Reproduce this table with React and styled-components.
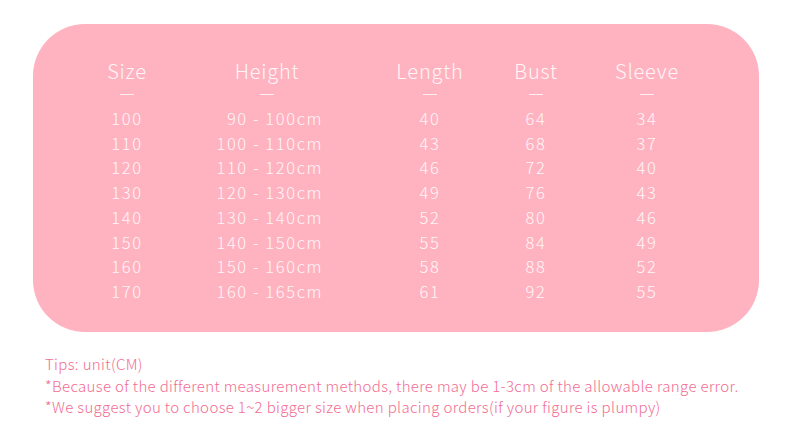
import styled, { createGlobalStyle } from "styled-components";

const Global = createGlobalStyle`
  html, body { margin: 0; padding: 0; background: #fff; }
  body { font-family: "Noto Sans CJK JP", "Noto Sans", sans-serif; }
`;

const rows = [
  ["100", "90 - 100cm", "40", "64", "34"],
  ["110", "100 - 110cm", "43", "68", "37"],
  ["120", "110 - 120cm", "46", "72", "40"],
  ["130", "120 - 130cm", "49", "76", "43"],
  ["140", "130 - 140cm", "52", "80", "46"],
  ["150", "140 - 150cm", "55", "84", "49"],
  ["160", "150 - 160cm", "58", "88", "52"],
  ["170", "160 - 165cm", "61", "92", "55"],
];

const heads = ["Size", "Height", "Length", "Bust", "Sleeve"];

const Page = styled.div`
  width: 790px;
  height: 438px;
  padding-top: 24px;
  box-sizing: border-box;
`;

const Panel = styled.div`
  margin-left: 33px;
  width: 726px;
  height: 308px;
  border-radius: 52px;
  background: #ffb3c0;
  box-sizing: border-box;
  padding: 35px 0 0 44px;
`;

const Table = styled.div`
  display: grid;
  grid-template-columns: 100px 180px 146px 66px 156px;
  color: #fff6f8;
`;

const Head = styled.div`
  text-align: center;
  font-size: 20px;
  font-weight: 300;
  line-height: 24px;
  letter-spacing: 0.8px;
`;

const Dash = styled.div`
  height: 23px;
  display: flex;
  justify-content: center;
  align-items: center;
  &::before {
    content: "";
    width: 14px;
    height: 1px;
    background: #fff0f3;
  }
`;

const Cell = styled.div`
  font-size: 16.5px;
  font-weight: 300;
  line-height: 24.7px;
  letter-spacing: 1.6px;
  text-align: ${(p) => (p.$right ? "right" : "center")};
  padding-right: ${(p) => (p.$right ? "34px" : "0")};
`;

const Tips = styled.div`
  padding: 21px 0 0 45px;
  color: #f26d92;
  font-size: 15px;
  line-height: 21.5px;
  font-weight: 300;
  letter-spacing: 0.35px;
`;

export default function App() {
  return (
    <Page>
      <Global />
      <Panel>
        <Table>
          {heads.map((h) => (
            <Head key={h}>{h}</Head>
          ))}
          {heads.map((h) => (
            <Dash key={h + "d"} />
          ))}
          {rows.map((r) =>
            r.map((v, i) => (
              <Cell key={r[0] + i} $right={i === 1}>
                {v}
              </Cell>
            ))
          )}
        </Table>
      </Panel>
      <Tips>
        <div>Tips: unit(CM)</div>
        <div>*Because of the different measurement methods, there may be 1-3cm of the allowable range error.</div>
        <div>*We suggest you to choose 1~2 bigger size when placing orders(if your figure is plumpy)</div>
      </Tips>
    </Page>
  );
}
